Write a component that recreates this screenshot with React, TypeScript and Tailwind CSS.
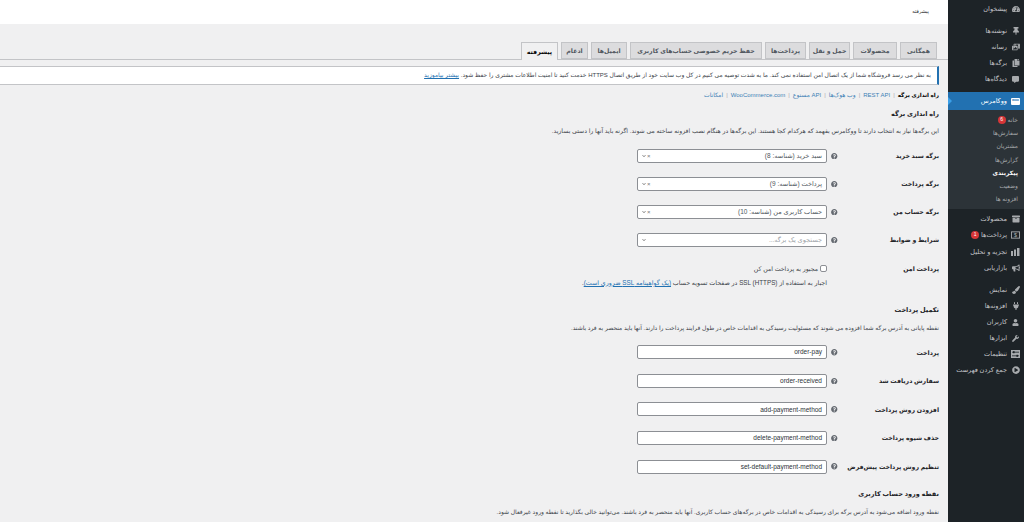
import React from "react";
import { FaTachometerAlt, FaThumbtack, FaPhotoVideo, FaCopy, FaCommentAlt, FaArchive, FaBullhorn, FaPaintBrush, FaPlug, FaUser, FaWrench, FaPlayCircle, FaQuestionCircle, FaChevronDown } from "react-icons/fa";

const font = "font-['Liberation_Sans','DejaVu_Sans',sans-serif]";

function PayIcon() {
  return (
    <svg width="10" height="8" viewBox="0 0 10 8">
      <rect x="0.5" y="0.5" width="9" height="7" fill="none" stroke="currentColor" />
      <text x="5" y="6.2" textAnchor="middle" fontSize="6" fill="currentColor" fontFamily="Liberation Sans">$</text>
    </svg>
  );
}

function BarsIcon() {
  return (
    <svg width="9" height="8" viewBox="0 0 9 8" fill="currentColor">
      <rect x="0" y="3" width="2" height="5" />
      <rect x="3" y="1.5" width="2" height="6.5" />
      <rect x="6" y="0" width="2.5" height="8" />
    </svg>
  );
}

function SettingsIcon() {
  return (
    <svg width="9" height="8" viewBox="0 0 9 8">
      <rect width="9" height="8" fill="currentColor" />
      <path d="M1 2.2H8M1 5.8H8" stroke="#1d2327" strokeWidth="0.8" />
      <rect x="2" y="1.2" width="1.6" height="2" fill="#1d2327" />
      <rect x="5.4" y="4.8" width="1.6" height="2" fill="#1d2327" />
    </svg>
  );
}

function Top({ icon, label, badge, mt }: { icon: React.ReactNode; label: string; badge?: string; mt?: string }) {
  return (
    <div className={`flex h-[16px] items-center pr-[4px] text-[6.5px] text-[#c3c4c7] ${mt ?? ""}`}>
      <span className="flex w-[9px] shrink-0 justify-center text-[#a7aaad]">{icon}</span>
      <span className="mr-[4px] whitespace-nowrap">{label}</span>
      {badge && <Badge n={badge} />}
    </div>
  );
}

function Badge({ n }: { n: string }) {
  return <span className="mr-[2px] flex h-[8px] w-[8px] items-center justify-center rounded-full bg-[#d63638] text-[5px] text-white">{n}</span>;
}

function Sub({ label, badge, active }: { label: string; badge?: string; active?: boolean }) {
  return (
    <div className={`flex h-[13.3px] items-center whitespace-nowrap pr-[6px] text-[6px] ${active ? "font-bold text-white" : "text-[#a7aaad]"}`}>
      {label}
      {badge && <Badge n={badge} />}
    </div>
  );
}

function Sidebar() {
  return (
    <aside className="h-[522px] w-[76px] shrink-0 bg-[#1d2327]">
      <Top mt="mt-[1px]" icon={<FaTachometerAlt size={8} />} label="پیشخوان" />
      <Top mt="mt-[6px]" icon={<FaThumbtack size={8} />} label="نوشته‌ها" />
      <Top icon={<FaPhotoVideo size={8} />} label="رسانه" />
      <Top icon={<FaCopy size={8} />} label="برگه‌ها" />
      <Top icon={<FaCommentAlt size={7} />} label="دیدگاه‌ها" />
      <div className="relative mt-[5px] flex h-[18px] items-center bg-[#2271b1] pr-[4px] text-[6.5px] text-white">
        <span className="flex h-[7px] w-[9px] items-center justify-center rounded-[1px] bg-white text-[3.5px] font-bold text-[#2271b1]">woo</span>
        <span className="mr-[4px]">ووکامرس</span>
        <span className="absolute left-0 top-[5px] h-0 w-0 border-y-[4px] border-l-[4px] border-r-0 border-y-transparent border-l-[#3a9fe8]" />
      </div>
      <div className="bg-[#2c3338] py-[2.5px]">
        <div className="h-[1px]" />
        <Sub label="خانه" badge="6" />
        <Sub label="سفارش‌ها" />
        <Sub label="مشتریان" />
        <Sub label="گزارش‌ها" />
        <Sub label="پیکربندی" active />
        <Sub label="وضعیت" />
        <Sub label="افزونه ها" />
      </div>
      <Top mt="mt-[2px]" icon={<FaArchive size={8} />} label="محصولات" />
      <Top icon={<PayIcon />} label="پرداخت‌ها" badge="1" />
      <Top mt="mt-[1px]" icon={<BarsIcon />} label="تجزیه و تحلیل" />
      <Top icon={<FaBullhorn size={8} />} label="بازاریابی" />
      <Top mt="mt-[6px]" icon={<FaPaintBrush size={8} />} label="نمایش" />
      <Top icon={<FaPlug size={8} />} label="افزونه‌ها" />
      <Top icon={<FaUser size={7} />} label="کاربران" />
      <Top icon={<FaWrench size={7} />} label="ابزارها" />
      <Top icon={<SettingsIcon />} label="تنظیمات" />
      <Top icon={<FaPlayCircle size={8} />} label="جمع کردن فهرست" />
    </aside>
  );
}

const tabs: [string, string][] = [
  ["همگانی", "w-[37px]"],
  ["محصولات", "w-[44px]"],
  ["حمل و نقل", "w-[41px]"],
  ["پرداخت‌ها", "w-[41px]"],
  ["حفظ حریم خصوصی حساب‌های کاربری", "w-[132px]"],
  ["ایمیل‌ها", "w-[36px]"],
  ["ادغام", "w-[27px]"],
];

function Tabs() {
  return (
    <div className="mt-[18px] flex h-[18px] gap-[3px] border-b border-[#c3c4c7] pr-[11px]">
      {tabs.map(([t, w]) => (
        <div key={t} className={`flex h-[17px] ${w} shrink-0 items-center justify-center whitespace-nowrap border border-[#c3c4c7] bg-[#dcdcde] text-[6.2px] font-bold text-[#50575e]`}>
          {t}
        </div>
      ))}
      <div className="flex h-[18px] w-[37px] shrink-0 items-center justify-center border border-b-0 border-[#c3c4c7] bg-[#f0f0f1] text-[6.2px] font-bold text-black">
        پیشرفته
      </div>
    </div>
  );
}

function Help() {
  return (
    <span className="flex w-[15px] shrink-0 justify-center text-[#646970]">
      <FaQuestionCircle size={6.5} />
    </span>
  );
}

function Row({ label, h, children }: { label: string; h: string; children: React.ReactNode }) {
  return (
    <div className={`flex ${h} items-center`}>
      <div className="w-[97px] shrink-0 whitespace-nowrap text-[6.2px] font-bold text-[#1d2327]">{label}</div>
      <Help />
      {children}
    </div>
  );
}

function SelectBox({ value, placeholder }: { value: string; placeholder?: boolean }) {
  return (
    <div className={`flex h-[14px] w-[190px] shrink-0 items-center justify-between rounded-[2px] border border-[#8c8f94] bg-white pl-[4px] pr-[4px] text-[6.5px] ${placeholder ? "text-[#a0a5aa]" : "text-[#50575e]"}`}>
      <span>{value}</span>
      <span className="flex items-center gap-[1px] text-[#777]" dir="ltr">
        <FaChevronDown size={4} />
        {!placeholder && <span className="text-[6px] leading-none">×</span>}
      </span>
    </div>
  );
}

function TextBox({ value }: { value: string }) {
  return (
    <div className="flex h-[14px] w-[190px] shrink-0 items-center rounded-[2px] border border-[#8c8f94] bg-white px-[4px] text-[6.5px] text-[#2c3338]">
      <span dir="ltr">{value}</span>
    </div>
  );
}

function Sep() {
  return <span className="mx-[3px] text-[#a7aaad]">|</span>;
}

function Content() {
  return (
    <main className="min-w-0 flex-1 overflow-hidden bg-[#f0f0f1] text-[#3c434a]">
      <header className="flex h-[24px] items-center bg-white pr-[19px] text-[5px] text-[#1d2327]">پیشرفته</header>
      <Tabs />
      <div className="ml-[-20px] mr-[9px] mt-[6px] flex h-[19px] items-center whitespace-nowrap border border-[#c3c4c7] border-r-[2px] border-r-[#2271b1] bg-white pr-[6px] text-[6px]">
        <span>به نظر می رسد فروشگاه شما از یک اتصال امن استفاده نمی کند. ما به شدت توصیه می کنیم در کل وب سایت خود از طریق اتصال HTTPS خدمت کنید تا امنیت اطلاعات مشتری را حفظ شود.&nbsp;</span>
        <span className="text-[#2271b1] underline">بیشتر بیاموزید</span>
      </div>
      <div className="pr-[9px]">
        <div className="mt-[6px] flex h-[8px] items-center whitespace-nowrap text-[6px] text-[#3c7fb5]">
          <b className="text-[5.6px] text-black">راه اندازی برگه</b>
          <Sep />
          <span>REST API</span>
          <Sep />
          <span>وب هوک‌ها</span>
          <Sep />
          <span>API مسنوع</span>
          <Sep />
          <span>WooCommerce.com</span>
          <Sep />
          <span>امکانات</span>
        </div>
        <h2 className="mt-[11px] h-[8px] text-[6.5px] font-bold leading-[8px] text-[#1d2327]">راه اندازی برگه</h2>
        <p className="mt-[9px] h-[8px] whitespace-nowrap text-[6.15px] leading-[8px]">این برگه‌ها نیاز به انتخاب دارند تا ووکامرس بفهمد که هرکدام کجا هستند. این برگه‌ها در هنگام نصب افزونه ساخته می شوند. اگرنه باید آنها را دستی بسازید.</p>
        <div className="mt-[7px]">
          <Row h="h-[28px]" label="برگه سبد خرید"><SelectBox value="سبد خرید (شناسه: 8)" /></Row>
          <Row h="h-[28px]" label="برگه پرداخت"><SelectBox value="پرداخت (شناسه: 9)" /></Row>
          <Row h="h-[28px]" label="برگه حساب من"><SelectBox value="حساب کاربری من (شناسه: 10)" /></Row>
          <Row h="h-[28px]" label="شرایط و ضوابط"><SelectBox value="جستجوی یک برگه..." placeholder /></Row>
          <div className="flex h-[29px] items-center">
            <div className="w-[112px] shrink-0 text-[6.2px] font-bold text-[#1d2327]">پرداخت امن</div>
            <div className="flex items-center gap-[2px] text-[6.2px]">
              <span className="h-[7px] w-[7px] rounded-[2px] border border-[#8c8f94] bg-white" />
              مجبور به پرداخت امن کن
            </div>
          </div>
          <p className="mr-[112px] mt-[-4px] h-[8px] whitespace-nowrap text-[6.3px] leading-[8px]">
            اجبار به استفاده از SSL (HTTPS) در صفحات تسویه حساب <span className="text-[#2271b1] underline">(یک گواهینامه SSL ضروری است)</span>.
          </p>
        </div>
        <h2 className="mt-[19px] h-[8px] text-[6.5px] font-bold leading-[8px] text-[#1d2327]">تکمیل پرداخت</h2>
        <p className="mt-[10px] h-[8px] whitespace-nowrap text-[6px] leading-[8px]">نقطه پایانی به آدرس برگه شما افزوده می شوند که مسئولیت رسیدگی به اقدامات خاص در طول فرایند پرداخت را دارند. آنها باید منحصر به فرد باشند.</p>
        <div className="mt-[6px]">
          <Row h="h-[28.6px]" label="پرداخت"><TextBox value="order-pay" /></Row>
          <Row h="h-[28.6px]" label="سفارش دریافت شد"><TextBox value="order-received" /></Row>
          <Row h="h-[28.6px]" label="افزودن روش پرداخت"><TextBox value="add-payment-method" /></Row>
          <Row h="h-[28.6px]" label="حذف شیوه پرداخت"><TextBox value="delete-payment-method" /></Row>
          <Row h="h-[28.6px]" label="تنظیم روش پرداخت پیش‌فرض"><TextBox value="set-default-payment-method" /></Row>
        </div>
        <h2 className="mt-[9px] h-[8px] text-[6.5px] font-bold leading-[8px] text-[#1d2327]">نقطه ورود حساب کاربری</h2>
        <p className="mt-[10px] h-[8px] whitespace-nowrap text-[6px] leading-[8px]">نقطه ورود اضافه می‌شود به آدرس برگه برای رسیدگی به اقدامات خاص در برگه‌های حساب کاربری. آنها باید منحصر به فرد باشند. می‌توانید خالی بگذارید تا نقطه ورود غیرفعال شود.</p>
      </div>
    </main>
  );
}

export default function App() {
  return (
    <div dir="rtl" className={`flex h-[522px] w-[1024px] overflow-hidden ${font}`}>
      <Sidebar />
      <Content />
    </div>
  );
}
